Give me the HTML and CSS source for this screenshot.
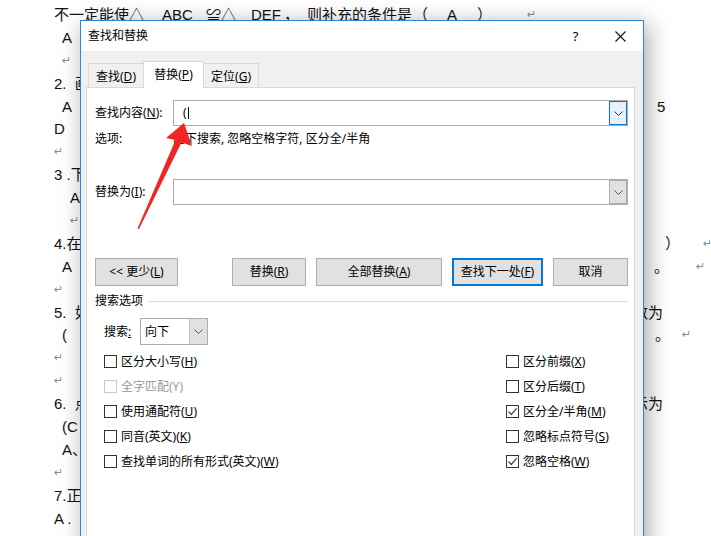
FILE: index.html
```html
<!DOCTYPE html>
<html>

<head>
	<meta charset="utf-8">
	<title>查找和替换</title>
	<link rel="stylesheet" href="styles.css">
</head>

<body>
	<div class="doc">
		<div class="line first">
			<span class="p1">不一定能使△</span>
			<span class="p2">ABC</span>
			<span class="p3">≌△</span>
			<span class="p4">DEF</span>
			<span class="p5">，</span>
			<span class="p6">则补充的条件是</span>
			<span class="p7">（</span>
			<span class="p8">A</span>
			<span class="p9">）</span>
			<span class="ret">↵</span>
		</div>
		<div class="line"><span class="l in8">A</span><span class="r"></span></div>
		<div class="line"><span class="l in8 ret">↵</span><span class="r"></span></div>
		<div class="line"><span class="l">2.  画</span><span class="r"></span></div>
		<div class="line"><span class="l in8">A</span><span class="r"><span class="in24">5</span></span></div>
		<div class="line"><span class="l">D</span><span class="r"></span></div>
		<div class="line"><span class="l ret">↵</span><span class="r"></span></div>
		<div class="line"><span class="l">3 .下</span><span class="r"></span></div>
		<div class="line"><span class="l in16">A</span><span class="r"></span></div>
		<div class="line"><span class="l in16 ret">↵</span><span class="r"></span></div>
		<div class="line"><span class="l">4.在</span><span class="r"><span class="in32">）</span><span class="ret gap23">↵</span></span></div>
		<div class="line"><span class="l in8">A</span><span class="r"><span class="in21">。</span><span class="ret gap27">↵</span></span></div>
		<div class="line"><span class="l ret">↵</span><span class="r"></span></div>
		<div class="line"><span class="l">5.  如</span><span class="r"><span>数为</span></span></div>
		<div class="line"><span class="l in8">(</span><span class="r"><span class="in22">。</span><span class="ret gap12">↵</span></span></div>
		<div class="line"><span class="l ret">↵</span><span class="r"></span></div>
		<div class="line"><span class="l ret">↵</span><span class="r"></span></div>
		<div class="line"><span class="l">6.  点</span><span class="r"><span>示为</span></span></div>
		<div class="line"><span class="l in8">(C</span><span class="r"></span></div>
		<div class="line"><span class="l in8">A、</span><span class="r"></span></div>
		<div class="line"><span class="l ret">↵</span><span class="r"></span></div>
		<div class="line"><span class="l">7.正</span><span class="r"></span></div>
		<div class="line"><span class="l">A .</span><span class="r"></span></div>
	</div>

	<div class="dialog">
		<div class="titlebar">
			<span class="title">查找和替换</span>
			<span class="tb-btn">?</span>
			<span class="tb-btn">
				<svg width="11" height="11" viewBox="0 0 11 11"><path d="M0.5 0.5L10.5 10.5M10.5 0.5L0.5 10.5" stroke="#111" stroke-width="1.1" fill="none"/></svg>
			</span>
		</div>
		<div class="dlg-body">
			<div class="tabs">
				<div class="tab"><span>查找(<u>D</u>)</span></div>
				<div class="tab active"><span>替换(<u>P</u>)</span></div>
				<div class="tab"><span>定位(<u>G</u>)</span></div>
			</div>
			<div class="panel">
				<div class="field">
					<label>查找内容(<u>N</u>):</label>
					<div class="combo">
						<span class="value"><span>(</span><i class="caret"></i></span>
						<span class="drop focus">
							<svg width="9" height="5" viewBox="0 0 9 5"><path d="M0.5 0.5L4.5 4.5L8.5 0.5" stroke="#333" fill="none"/></svg>
						</span>
					</div>
				</div>
				<div class="opts">
					<span class="opts-label">选项:</span>
					<span>向下搜索, 忽略空格字符, 区分全/半角</span>
				</div>
				<div class="field replace">
					<label>替换为(<u>I</u>):</label>
					<div class="combo">
						<span class="value"></span>
						<span class="drop">
							<svg width="9" height="5" viewBox="0 0 9 5"><path d="M0.5 0.5L4.5 4.5L8.5 0.5" stroke="#555" fill="none"/></svg>
						</span>
					</div>
				</div>
				<div class="buttons">
					<button class="btn less">&lt;&lt; 更少(<u>L</u>)</button>
					<button class="btn w74 push">替换(<u>R</u>)</button>
					<button class="btn w126">全部替换(<u>A</u>)</button>
					<button class="btn w91 default">查找下一处(<u>F</u>)</button>
					<button class="btn w75">取消</button>
				</div>
				<div class="group-head"><span>搜索选项</span></div>
				<div class="search-dir">
					<label>搜索<u>:</u></label>
					<div class="select">
						<span class="value">向下</span>
						<span class="drop">
							<svg width="9" height="5" viewBox="0 0 9 5"><path d="M0.5 0.5L4.5 4.5L8.5 0.5" stroke="#555" fill="none"/></svg>
						</span>
					</div>
				</div>
				<div class="checks">
					<div class="check-col left">
						<div class="check"><span class="box"></span><span>区分大小写(<u>H</u>)</span></div>
						<div class="check disabled"><span class="box"></span><span>全字匹配(Y)</span></div>
						<div class="check"><span class="box"></span><span>使用通配符(<u>U</u>)</span></div>
						<div class="check"><span class="box"></span><span>同音(英文)(<u>K</u>)</span></div>
						<div class="check"><span class="box"></span><span>查找单词的所有形式(英文)(<u>W</u>)</span></div>
					</div>
					<div class="check-col">
						<div class="check"><span class="box"></span><span>区分前缀(<u>X</u>)</span></div>
						<div class="check"><span class="box"></span><span>区分后缀(<u>T</u>)</span></div>
						<div class="check"><span class="box">
							<svg width="11" height="11" viewBox="0 0 11 11"><path d="M1.5 5.5L4.3 8.5L9.8 2.2" stroke="#444" stroke-width="1.2" fill="none"/></svg>
						</span><span>区分全/半角(<u>M</u>)</span></div>
						<div class="check"><span class="box"></span><span>忽略标点符号(<u>S</u>)</span></div>
						<div class="check"><span class="box">
							<svg width="11" height="11" viewBox="0 0 11 11"><path d="M1.5 5.5L4.3 8.5L9.8 2.2" stroke="#444" stroke-width="1.2" fill="none"/></svg>
						</span><span>忽略空格(<u>W</u>)</span></div>
					</div>
				</div>
			</div>
		</div>
	</div>

	<!-- red annotation arrow -->
	<svg class="arrow" width="711" height="536" viewBox="0 0 711 536">
		<polygon points="184,123 192,146 181.5,142.5 139,229 137.5,228.5 175.5,140 166,138" fill="#f02525"/>
	</svg>
</body>

</html>
```

FILE: styles.css
```css
* {
	margin: 0px;
	padding: 0px;
	box-sizing: border-box;
}

body {
	width: 711px;
	height: 536px;
	overflow: hidden;
	position: relative;
	background: #fff;
	font-family: "Liberation Sans", "Noto Sans CJK SC", sans-serif;
}

u {
	text-decoration: underline;
	text-underline-offset: 1px;
}

/* document behind the dialog */

.doc {
	padding-top: 4px;
	font-size: 15px;
	color: #111;
}

.line {
	display: grid;
	grid-template-columns: 579px 1fr;
	height: 22.9px;
	line-height: 22.9px;
	padding-left: 54px;
	white-space: pre;
}

.line .l {
	overflow: hidden;
}

.line .r {
	display: flex;
}

.line.first {
	display: flex;
}

.first span {
	flex: none;
}

.first .p1 { width: 108px; }
.first .p2 { width: 44px; }
.first .p3 { width: 45px; }
.first .p4 { width: 33px; }
.first .p5 { width: 23px; }
.first .p6 { width: 106px; }
.first .p7 { width: 34px; }
.first .p8 { width: 30px; }
.first .p9 { width: 50px; }

.in8 { padding-left: 8px; }
.in16 { padding-left: 16px; }
.in21 { padding-left: 21px; }
.in22 { padding-left: 22px; }
.in24 { padding-left: 24px; }
.in32 { padding-left: 32px; }
.gap12 { margin-left: 12px; }
.gap23 { margin-left: 23px; }
.gap27 { margin-left: 27px; }

.ret {
	font-family: "DejaVu Sans", sans-serif;
	font-size: 11px;
	color: #8a8a8a;
}

/* dialog window */

.dialog {
	position: absolute;
	left: 80px;
	top: 20px;
	width: 564px;
	height: 540px;
	background: #f0f0f0;
	border: 1px solid #2b87d8;
	box-shadow: 4px 4px 22px rgba(0, 0, 0, 0.35);
	font-family: "Noto Sans", "Noto Sans CJK SC", sans-serif;
	font-size: 12px;
	line-height: 16px;
	color: #000;
	white-space: nowrap;
}

.titlebar {
	height: 30px;
	background: #fff;
	display: flex;
	align-items: center;
}

.titlebar .title {
	flex: 1;
	padding-left: 7px;
}

.tb-btn {
	width: 45px;
	height: 30px;
	display: flex;
	align-items: center;
	justify-content: center;
	font-size: 13px;
}

.dlg-body {
	padding: 0 8px 0 5px;
}

.tabs {
	height: 36px;
	display: flex;
	align-items: flex-end;
	padding-left: 2px;
}

.tab {
	height: 24px;
	width: 56px;
	border: 1px solid #d9d9d9;
	border-bottom: none;
	display: flex;
	align-items: center;
	justify-content: center;
	padding-top: 2px;
}

.tab + .tab {
	margin-left: -1px;
}

.tab.active {
	width: 61px;
	height: 27px;
	margin-bottom: -1px;
	background: #fff;
	position: relative;
	z-index: 1;
	padding-top: 0;
}

.panel {
	background: #fff;
	border: 1px solid #d9d9d9;
	height: 470px;
	padding: 12px 6px 0 8px;
}

.field {
	display: flex;
	align-items: center;
	height: 26px;
}

.field label {
	width: 78px;
}

.field.replace {
	margin-top: 32px;
}

.combo {
	flex: 1;
	height: 26px;
	border: 1px solid #adadad;
	display: flex;
	background: #fff;
}

.combo .value {
	flex: 1;
	padding-left: 9px;
	line-height: 24px;
	display: flex;
	align-items: center;
}

.caret {
	display: inline-block;
	width: 1px;
	height: 12px;
	background: #000;
	margin-left: 1px;
}

.drop {
	width: 18px;
	height: 24px;
	display: flex;
	align-items: center;
	justify-content: center;
	background: #e1e1e1;
	border: 1px solid #adadad;
}

.drop.focus {
	background: #e5f1fb;
	border-color: #0078d7;
}

.opts {
	display: flex;
	height: 16px;
	line-height: 16px;
	margin-top: 5px;
}

.opts-label {
	width: 78px;
}

.buttons {
	display: flex;
	margin-top: 53px;
	gap: 10px;
}

.btn {
	height: 28px;
	background: #e1e1e1;
	border: 1px solid #adadad;
	font-family: inherit;
	font-size: 12px;
	line-height: 16px;
	color: #000;
}

.btn.less { width: 83px; }
.btn.w74 { width: 74px; }
.btn.w75 { width: 75px; }
.btn.w91 { width: 91px; }
.btn.w126 { width: 126px; }

.btn.push {
	margin-left: auto;
}

.btn.default {
	border: 2px solid #0078d7;
}

.group-head {
	display: flex;
	align-items: center;
	height: 16px;
	margin-top: 7px;
}

.group-head::after {
	content: "";
	flex: 1;
	height: 1px;
	background: #dcdcdc;
	margin-left: 5px;
}

.search-dir {
	display: flex;
	align-items: center;
	margin-top: 9px;
	padding-left: 9px;
}

.search-dir label {
	width: 36px;
}

.select {
	width: 68px;
	height: 27px;
	border: 1px solid #adadad;
	display: flex;
	background: #fff;
}

.select .value {
	flex: 1;
	padding-left: 4px;
	line-height: 25px;
}

.select .drop {
	height: 25px;
	border-width: 0 0 0 1px;
	border-color: #c6c6c6;
}

.checks {
	display: flex;
	margin-top: 4px;
	padding-left: 9px;
}

.check-col.left {
	width: 402px;
}

.check {
	height: 25px;
	display: flex;
	align-items: center;
}

.check .box {
	width: 13px;
	height: 13px;
	border: 1px solid #333;
	margin-right: 4px;
	display: flex;
	align-items: center;
	justify-content: center;
	background: #fff;
}

.check.disabled {
	color: #9a9a9a;
}

.check.disabled .box {
	border-color: #c8c8c8;
}

.arrow {
	position: absolute;
	left: 0;
	top: 0;
	pointer-events: none;
}
```
